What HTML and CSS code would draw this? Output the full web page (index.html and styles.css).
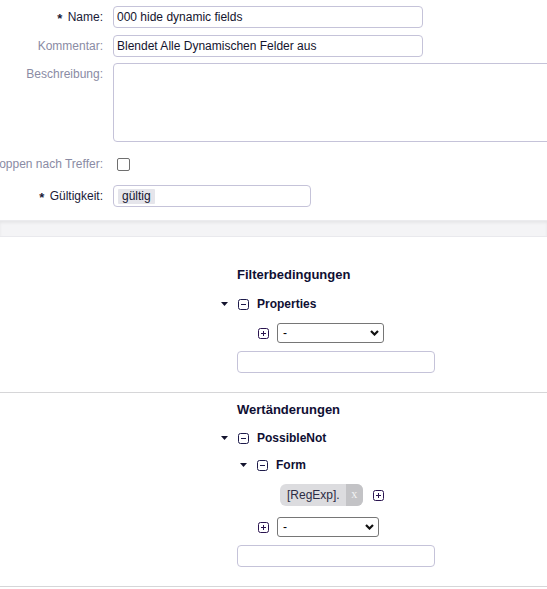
FILE: index.html
```html
<!DOCTYPE html>
<html lang="de">
<head>
<meta charset="utf-8">
<title>Filter</title>
<link rel="stylesheet" href="styles.css">
</head>
<body>
<div class="form">
  <div class="row r1">
    <div class="lbl req"><span><b class="star">*</b> Name:</span></div>
    <input class="inp inp-std" type="text" value="000 hide dynamic fields">
  </div>
  <div class="row r2">
    <div class="lbl"><span>Kommentar:</span></div>
    <input class="inp inp-std" type="text" value="Blendet Alle Dynamischen Felder aus">
  </div>
  <div class="row r3">
    <div class="lbl"><span>Beschreibung:</span></div>
    <textarea class="inp area"></textarea>
  </div>
  <div class="row r4">
    <div class="lbl"><span>Stoppen nach Treffer:</span></div>
    <div class="field-cb"><span class="cb"></span></div>
  </div>
  <div class="row r5">
    <div class="lbl req"><span><b class="star">*</b> Gültigkeit:</span></div>
    <div class="inp multi"><span class="chip">gültig</span></div>
  </div>
</div>

<div class="band"></div>

<section class="sec sec1">
  <h3 class="heading">Filterbedingungen</h3>
  <div class="node">
    <svg class="tri" width="7" height="4" viewBox="0 0 7 4"><polygon points="0,0 7,0 3.5,4" fill="#14142e"/></svg>
    <svg class="box" width="11" height="11" viewBox="0 0 11 11"><rect x="0.5" y="0.5" width="10" height="10" rx="2" fill="none" stroke="#1d1a4a"/><line x1="3" y1="5.5" x2="8" y2="5.5" stroke="#1d1a4a"/></svg>
    <span class="node-txt">Properties</span>
  </div>
  <div class="addrow">
    <svg class="box" width="11" height="11" viewBox="0 0 11 11"><rect x="0.5" y="0.5" width="10" height="10" rx="2" fill="none" stroke="#2a1450"/><line x1="3" y1="5.5" x2="8" y2="5.5" stroke="#2a1450"/><line x1="5.5" y1="3" x2="5.5" y2="8" stroke="#2a1450"/></svg>
    <div class="sel sel-a"><span>-</span><svg width="9" height="6" viewBox="0 0 9 6"><polyline points="1,1 4.5,4.5 8,1" fill="none" stroke="#111" stroke-width="2.2"/></svg></div>
  </div>
  <input class="inp wide" type="text" value="">
</section>

<section class="sec sec2">
  <h3 class="heading">Wertänderungen</h3>
  <div class="node">
    <svg class="tri" width="7" height="4" viewBox="0 0 7 4"><polygon points="0,0 7,0 3.5,4" fill="#14142e"/></svg>
    <svg class="box" width="11" height="11" viewBox="0 0 11 11"><rect x="0.5" y="0.5" width="10" height="10" rx="2" fill="none" stroke="#1d1a4a"/><line x1="3" y1="5.5" x2="8" y2="5.5" stroke="#1d1a4a"/></svg>
    <span class="node-txt">PossibleNot</span>
  </div>
  <div class="node node-sub">
    <svg class="tri" width="7" height="4" viewBox="0 0 7 4"><polygon points="0,0 7,0 3.5,4" fill="#14142e"/></svg>
    <svg class="box" width="11" height="11" viewBox="0 0 11 11"><rect x="0.5" y="0.5" width="10" height="10" rx="2" fill="none" stroke="#1d1a4a"/><line x1="3" y1="5.5" x2="8" y2="5.5" stroke="#1d1a4a"/></svg>
    <span class="node-txt">Form</span>
  </div>
  <div class="tagrow">
    <span class="tag"><span class="tag-txt">[RegExp].</span><span class="tag-x">x</span></span>
    <svg class="box" width="11" height="11" viewBox="0 0 11 11"><rect x="0.5" y="0.5" width="10" height="10" rx="2" fill="none" stroke="#2a1450"/><line x1="3" y1="5.5" x2="8" y2="5.5" stroke="#2a1450"/><line x1="5.5" y1="3" x2="5.5" y2="8" stroke="#2a1450"/></svg>
  </div>
  <div class="addrow">
    <svg class="box" width="11" height="11" viewBox="0 0 11 11"><rect x="0.5" y="0.5" width="10" height="10" rx="2" fill="none" stroke="#2a1450"/><line x1="3" y1="5.5" x2="8" y2="5.5" stroke="#2a1450"/><line x1="5.5" y1="3" x2="5.5" y2="8" stroke="#2a1450"/></svg>
    <div class="sel sel-b"><span>-</span><svg width="9" height="6" viewBox="0 0 9 6"><polyline points="1,1 4.5,4.5 8,1" fill="none" stroke="#111" stroke-width="2.2"/></svg></div>
  </div>
  <input class="inp wide" type="text" value="">
</section>
</body>
</html>
```

FILE: styles.css
```css
html, body {
  margin: 0;
  padding: 0;
  background: #ffffff;
  overflow: hidden;
}
body {
  font-family: "Liberation Sans", Arial, sans-serif;
  font-size: 12px;
  color: #14142e;
}

.form {
  padding-top: 6px;
  padding-bottom: 13px;
}
.row {
  display: grid;
  grid-template-columns: 103px 1fr;
  column-gap: 10px;
  align-items: start;
}
.r2 { margin-top: 7px; }
.r3 { margin-top: 6px; }
.r4 { margin-top: 11px; }
.r5 { margin-top: 10px; }

.lbl {
  display: flex;
  justify-content: flex-end;
  line-height: 22px;
  height: 22px;
  color: #8a8ba4;
  white-space: nowrap;
}
.lbl.req { color: #1a1a38; }
.star {
  font-size: 13px;
  font-weight: bold;
  margin-right: 2px;
  position: relative;
  top: 2px;
}

.inp {
  box-sizing: border-box;
  border: 1px solid #c5c3d9;
  border-radius: 4px;
  background: #fff;
  font-family: "Liberation Sans", Arial, sans-serif;
  font-size: 12px;
  color: #14142e;
  padding: 0 3px;
  margin: 0;
  outline: none;
}
.inp-std {
  width: 310px;
  height: 22px;
}
.area {
  display: block;
  width: 460px;
  height: 79px;
  resize: none;
  border-radius: 4px 0 0 4px;
}

.field-cb {
  height: 22px;
  display: flex;
  align-items: center;
  padding-left: 4px;
}
.cb {
  display: block;
  box-sizing: border-box;
  width: 13px;
  height: 13px;
  border: 1px solid #6f6f6f;
  border-radius: 2px;
  background: #fff;
}

.multi {
  width: 198px;
  height: 22px;
  display: flex;
  align-items: center;
  padding: 0 4px;
}
.chip {
  background: #e5e5eb;
  color: #14142e;
  padding: 0 4px;
  line-height: 15px;
  height: 15px;
  border-radius: 1px;
}

.band {
  height: 15px;
  background: #f4f4f6;
  box-shadow: inset 0 2px 3px rgba(0, 0, 0, 0.06);
  border-top: 1px solid #ebebee;
  border-bottom: 1px solid #e9e9ed;
}

.sec {
  padding-left: 221px;
  padding-bottom: 20px;
  border-bottom: 1px solid #d6d6d8;
}
.sec1 { padding-top: 30px; padding-bottom: 19px; }
.sec2 { padding-top: 9px; padding-bottom: 19px; }

.heading {
  margin: 0 0 13px 16px;
  font-size: 13px;
  font-weight: bold;
  line-height: 16px;
  color: #0f0f33;
}
.sec2 .heading { margin-bottom: 12px; }

.node {
  display: flex;
  align-items: center;
  height: 16px;
}
.node .tri { margin-right: 10px; flex: none; }
.node .box { margin-right: 8px; flex: none; }
.node-txt {
  font-weight: bold;
  color: #0f0f33;
}
.node-sub {
  margin-top: 11px;
  margin-left: 19px;
}

.addrow {
  display: flex;
  align-items: center;
  margin-top: 11px;
  margin-left: 37px;
}
.addrow .box { margin-right: 8px; flex: none; }

.sel {
  box-sizing: border-box;
  height: 20px;
  border: 1px solid #767676;
  border-radius: 3px;
  display: flex;
  align-items: center;
  justify-content: space-between;
  padding: 0 4px 0 5px;
  color: #000;
  background: #fff;
}
.sel-a { width: 107px; }
.sel-b { width: 102px; }

.wide {
  display: block;
  width: 198px;
  height: 22px;
  margin-top: 8px;
  margin-left: 16px;
}

.tagrow {
  display: flex;
  align-items: center;
  margin-top: 11px;
  margin-left: 59px;
}
.tag {
  display: flex;
  height: 22px;
  border-radius: 6px;
  overflow: hidden;
  background: #dcdcdf;
  margin-right: 10px;
}
.tag-txt {
  line-height: 22px;
  padding: 0 6px 0 7px;
  color: #2c2c44;
}
.tag-x {
  width: 17px;
  text-align: center;
  line-height: 20px;
  background: #c3c3c6;
  color: #f2f2f2;
  font-family: "Liberation Serif", serif;
  font-size: 12px;
}
```
